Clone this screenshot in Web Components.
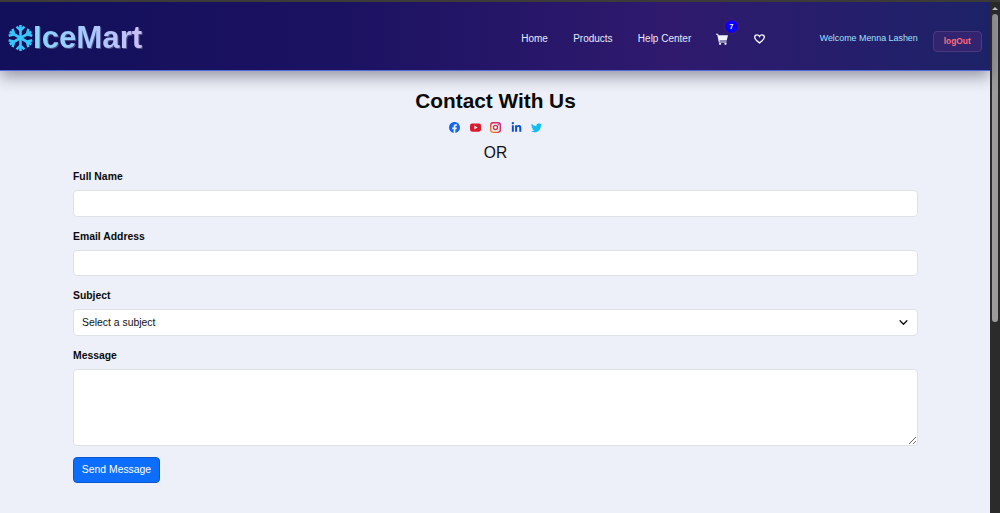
<!DOCTYPE html>
<html lang="en">
<head>
<meta charset="utf-8">
<title>IceMart - Contact</title>
<style>
  html, body { margin: 0; height: 513px; overflow: hidden; background: #edf0f8; }
  body { display: flex; font-family: "Liberation Sans", Arial, sans-serif; }
  page-shell { flex: 1; min-width: 0; }
</style>
</head>
<body>
<page-shell>
  <ice-navbar slot="nav"></ice-navbar>
  <contact-form></contact-form>
</page-shell>
<fake-scrollbar></fake-scrollbar>

<script>
// Column that holds the navbar and the page content
class PageShell extends HTMLElement {
  constructor() {
    super();
    this.attachShadow({ mode: 'open' });
  }
  connectedCallback() {
    this.shadowRoot.innerHTML = `
      <style>
        :host { display: flex; flex-direction: column; height: 513px; }
      </style>
      <slot name="nav"></slot>
      <slot></slot>
    `;
  }
}

// Top bar with logo, links, cart and user
class IceNavbar extends HTMLElement {
  constructor() {
    super();
    this.attachShadow({ mode: 'open' });
  }
  connectedCallback() {
    this.shadowRoot.innerHTML = `
      <style>
        :host {
          display: block;
          position: relative;
          z-index: 2;
          border-top: 2px solid #3c3b38;
          box-shadow: 0 5px 15px rgba(40, 40, 60, .48);
          font-size: 10px;
        }
        .bar {
          height: 68px;
          display: flex;
          align-items: center;
          padding: 0 8px;
          white-space: nowrap;
          background: linear-gradient(90deg, #12105a 0%, #1c1262 35%, #2f1a6e 68%, #1d2268 100%);
          border-bottom: 1px solid #5468e0;
        }
        .logo {
          display: flex;
          flex: none;
          align-items: center;
          font-size: 31.2px;
          font-weight: 700;
          margin-top: 3px;
        }
        .logo svg { width: 25px; height: 28px; margin-top: 1px; }
        .logo span {
          background: linear-gradient(90deg, #86d6fb, #a9c8ff 55%, #cbbff6);
          -webkit-background-clip: text;
          background-clip: text;
          color: transparent;
          filter: drop-shadow(1px 1px 0 rgba(255, 255, 255, .25));
        }
        nav {
          flex: none;
          margin-left: 379px;
          margin-top: 5px;
          display: flex;
          align-items: center;
          gap: 25.25px;
          color: #e6e9fb;
        }
        .cart { position: relative; display: flex; }
        .cart svg, .heart svg { display: block; }
        .badge {
          position: absolute;
          left: 8.5px;
          top: -12.5px;
          width: 13px;
          height: 13px;
          border-radius: 50%;
          background: #0a00f5;
          box-shadow: 0 0 2px 0 #8a1a50;
          color: #fff;
          font-size: 7px;
          font-weight: 700;
          line-height: 13px;
          text-align: center;
        }
        .heart { display: flex; }
        .user {
          flex: none;
          margin-left: 55px;
          margin-top: 3px;
          color: #9fe0ff;
          font-size: 8.9px;
        }
        button {
          flex: none;
          margin-left: 15px;
          margin-top: 10px;
          width: 49px;
          height: 21px;
          padding: 0;
          border: 1px solid #4c3a80;
          border-radius: 4px;
          background: #33246f;
          color: #ff6b7d;
          font: 700 8.4px "Liberation Sans", Arial, sans-serif;
        }
      </style>
      <div class="bar">
        <div class="logo">
          <svg viewBox="0 0 25 28" fill="none" stroke="#38c6fa" stroke-width="2.6">
            <g><path d="M12.5 14V1"/><path d="M8.6 2.6l3.9 3.9 3.9-3.9"/></g>
            <g transform="rotate(60 12.5 14)"><path d="M12.5 14V1.5"/><path d="M8.6 2.6l3.9 3.9 3.9-3.9"/></g>
            <g transform="rotate(120 12.5 14)"><path d="M12.5 14V1.5"/><path d="M8.6 2.6l3.9 3.9 3.9-3.9"/></g>
            <g transform="rotate(180 12.5 14)"><path d="M12.5 14V1"/><path d="M8.6 2.6l3.9 3.9 3.9-3.9"/></g>
            <g transform="rotate(240 12.5 14)"><path d="M12.5 14V1.5"/><path d="M8.6 2.6l3.9 3.9 3.9-3.9"/></g>
            <g transform="rotate(300 12.5 14)"><path d="M12.5 14V1.5"/><path d="M8.6 2.6l3.9 3.9 3.9-3.9"/></g>
          </svg>
          <span>IceMart</span>
        </div>
        <nav>
          <span>Home</span>
          <span>Products</span>
          <span>Help Center</span>
          <div class="cart">
            <svg width="12" height="12" viewBox="0 0 16 16" fill="#f2f3fb">
              <path d="M0 1h2.8l.5 2H16l-1.7 7H4.7l.3 1.4h9.2v1.4H3.8L1.7 2.4H0z"/>
              <circle cx="5.4" cy="14.4" r="1.5"/><circle cx="12.6" cy="14.4" r="1.5"/>
            </svg>
            <span class="badge">7</span>
          </div>
          <div class="heart">
            <svg width="11" height="10" viewBox="0 0 16 14" fill="none" stroke="#f6f6fd" stroke-width="2">
              <path d="M8 12.6C3.6 9.4 1 7.1 1 4.4 1 2.5 2.5 1 4.4 1 5.8 1 7.2 1.8 8 3.2 8.8 1.8 10.2 1 11.6 1 13.5 1 15 2.5 15 4.4c0 2.7-2.6 5-7 8.2z"/>
            </svg>
          </div>
        </nav>
        <span class="user">Welcome Menna Lashen</span>
        <button>logOut</button>
      </div>
    `;
  }
}

// Row of small brand icons under the title
class SocialIcons extends HTMLElement {
  constructor() {
    super();
    this.attachShadow({ mode: 'open' });
  }
  connectedCallback() {
    this.shadowRoot.innerHTML = `
      <style>
        :host { display: flex; justify-content: center; gap: 9.5px; height: 11px; align-items: center; }
        svg { width: 11px; height: 11px; display: block; }
      </style>
      <svg viewBox="0 0 16 16" fill="#1266f1">
        <path d="M16 8.05C16 3.6 12.42 0 8 0S0 3.6 0 8.05c0 4.02 2.93 7.35 6.75 7.95v-5.62H4.72V8.05h2.03V6.28c0-2.02 1.2-3.14 3.02-3.14.88 0 1.8.16 1.8.16v1.98h-1.01c-1 0-1.31.62-1.31 1.26v1.51h2.22l-.35 2.33H9.25V16c3.82-.6 6.75-3.93 6.75-7.95z"/>
      </svg>
      <svg viewBox="0 0 16 16">
        <rect y="2" width="16" height="12" rx="3" fill="#dc1a2e"/>
        <path d="M6.4 5.2v5.4L11 8z" fill="#fff"/>
      </svg>
      <svg viewBox="0 0 16 16" fill="none">
        <defs>
          <linearGradient id="ig" x1="0" y1="1" x2="1" y2="0">
            <stop offset="0" stop-color="#f09433"/>
            <stop offset=".5" stop-color="#e6283f"/>
            <stop offset="1" stop-color="#c1258e"/>
          </linearGradient>
        </defs>
        <rect x="1" y="1" width="14" height="14" rx="3.6" stroke="url(#ig)" stroke-width="2"/>
        <circle cx="8" cy="8" r="3" stroke="#e0283f" stroke-width="1.8"/>
        <circle cx="12" cy="4" r="1" fill="#c1258e"/>
      </svg>
      <svg viewBox="0 0 448 512" fill="#0a4fd0">
        <path d="M100.28 448H7.4V148.9h92.88zM53.79 108.1C24.09 108.1 0 83.5 0 53.8a53.79 53.79 0 0 1 107.58 0c0 29.7-24.1 54.3-53.79 54.3zM447.9 448h-92.68V302.4c0-34.7-.7-79.2-48.29-79.2-48.29 0-55.69 37.7-55.69 76.7V448h-92.78V148.9h89.08v40.8h1.3c12.4-23.5 42.69-48.3 87.88-48.3 94 0 111.28 61.9 111.28 142.3V448z"/>
      </svg>
      <svg viewBox="0 0 16 16" fill="#12bdf0">
        <path d="M5.03 15c6.04 0 9.34-5 9.34-9.33 0-.14 0-.28-.01-.43A6.69 6.69 0 0 0 16 3.54a6.66 6.66 0 0 1-1.89.52 3.3 3.3 0 0 0 1.45-1.82 6.53 6.53 0 0 1-2.09.8 3.29 3.29 0 0 0-5.6 3A9.33 9.33 0 0 1 1.11 2.6a3.29 3.29 0 0 0 1.02 4.38A3.32 3.32 0 0 1 .64 6.58v.04a3.29 3.29 0 0 0 2.63 3.22 3.2 3.2 0 0 1-1.48.06 3.28 3.28 0 0 0 3.07 2.28A6.59 6.59 0 0 1 0 13.54 9.34 9.34 0 0 0 5.03 15z"/>
      </svg>
    `;
  }
}

// Label plus the control passed in through the slot
class FormField extends HTMLElement {
  constructor() {
    super();
    this.attachShadow({ mode: 'open' });
  }
  connectedCallback() {
    this.shadowRoot.innerHTML = `
      <style>
        :host { display: block; margin-bottom: 13px; }
        label { display: block; height: 14px; line-height: 14px; margin-bottom: 6px; font-size: 10.4px; font-weight: 700; color: #0a0a0a; }
      </style>
      <label>${this.getAttribute('label')}</label>
      <slot></slot>
    `;
  }
}

// Title, social icons and the form itself
class ContactForm extends HTMLElement {
  constructor() {
    super();
    this.attachShadow({ mode: 'open' });
  }
  connectedCallback() {
    this.shadowRoot.innerHTML = `
      <style>
        :host { display: block; padding-top: 17.5px; }
        .wrap { width: 845px; margin-left: 73px; }
        h1 { margin: 0 0 9.5px; font-size: 20.8px; line-height: 24px; font-weight: 700; text-align: center; color: #0a0a0a; }
        p { margin: 11px 0 8px; font-size: 15.6px; line-height: 18px; text-align: center; color: #111; }
        input, select, textarea {
          display: block;
          box-sizing: border-box;
          width: 100%;
          margin: 0;
          background: #fff;
          border: 1px solid #dee2e6;
          border-radius: 4px;
          outline: 0;
          font: 10.4px "Liberation Sans", Arial, sans-serif;
          color: #111;
        }
        input { height: 26.5px; }
        select {
          height: 26.5px;
          padding: 0 8px;
          -webkit-appearance: none;
          appearance: none;
          background: #fff url("data:image/svg+xml,%3Csvg xmlns='http://www.w3.org/2000/svg' viewBox='0 0 16 16'%3E%3Cpath fill='none' stroke='%23111' stroke-width='2.4' stroke-linecap='round' stroke-linejoin='round' d='M2 5l6 6 6-6'/%3E%3C/svg%3E") no-repeat right 9px center / 9px 9px;
        }
        textarea { height: 77px; }
        button {
          display: block;
          width: 87px;
          height: 26px;
          padding: 0;
          margin-top: -2px;
          border: 1px solid #0a58ca;
          border-radius: 4px;
          background: #0d6efd;
          color: #fff;
          font: 10.4px "Liberation Sans", Arial, sans-serif;
        }
      </style>
      <div class="wrap">
        <h1>Contact With Us</h1>
        <social-icons></social-icons>
        <p>OR</p>
        <form-field label="Full Name"><input type="text"></form-field>
        <form-field label="Email Address"><input type="email"></form-field>
        <form-field label="Subject">
          <select><option>Select a subject</option></select>
        </form-field>
        <form-field label="Message"><textarea></textarea></form-field>
        <button type="button">Send Message</button>
      </div>
    `;
  }
}

// Dark window scrollbar on the right edge
class FakeScrollbar extends HTMLElement {
  constructor() {
    super();
    this.attachShadow({ mode: 'open' });
  }
  connectedCallback() {
    this.shadowRoot.innerHTML = `
      <style>
        :host {
          display: flex;
          flex-direction: column;
          align-items: center;
          flex: none;
          width: 10px;
          height: 513px;
          box-sizing: border-box;
          padding-top: 5px;
          background: #2b2b2b;
          border-top: 2px solid #3c3b38;
        }
        .arrow { width: 0; height: 0; border: 3px solid transparent; border-top: 0; border-bottom: 3px solid #cfcfcf; }
        .thumb { width: 6px; height: 308px; margin-top: 4px; border-radius: 3px; background: #9c9c9c; }
      </style>
      <div class="arrow"></div>
      <div class="thumb"></div>
    `;
  }
}

customElements.define('page-shell', PageShell);
customElements.define('ice-navbar', IceNavbar);
customElements.define('social-icons', SocialIcons);
customElements.define('form-field', FormField);
customElements.define('contact-form', ContactForm);
customElements.define('fake-scrollbar', FakeScrollbar);
</script>
</body>
</html>
